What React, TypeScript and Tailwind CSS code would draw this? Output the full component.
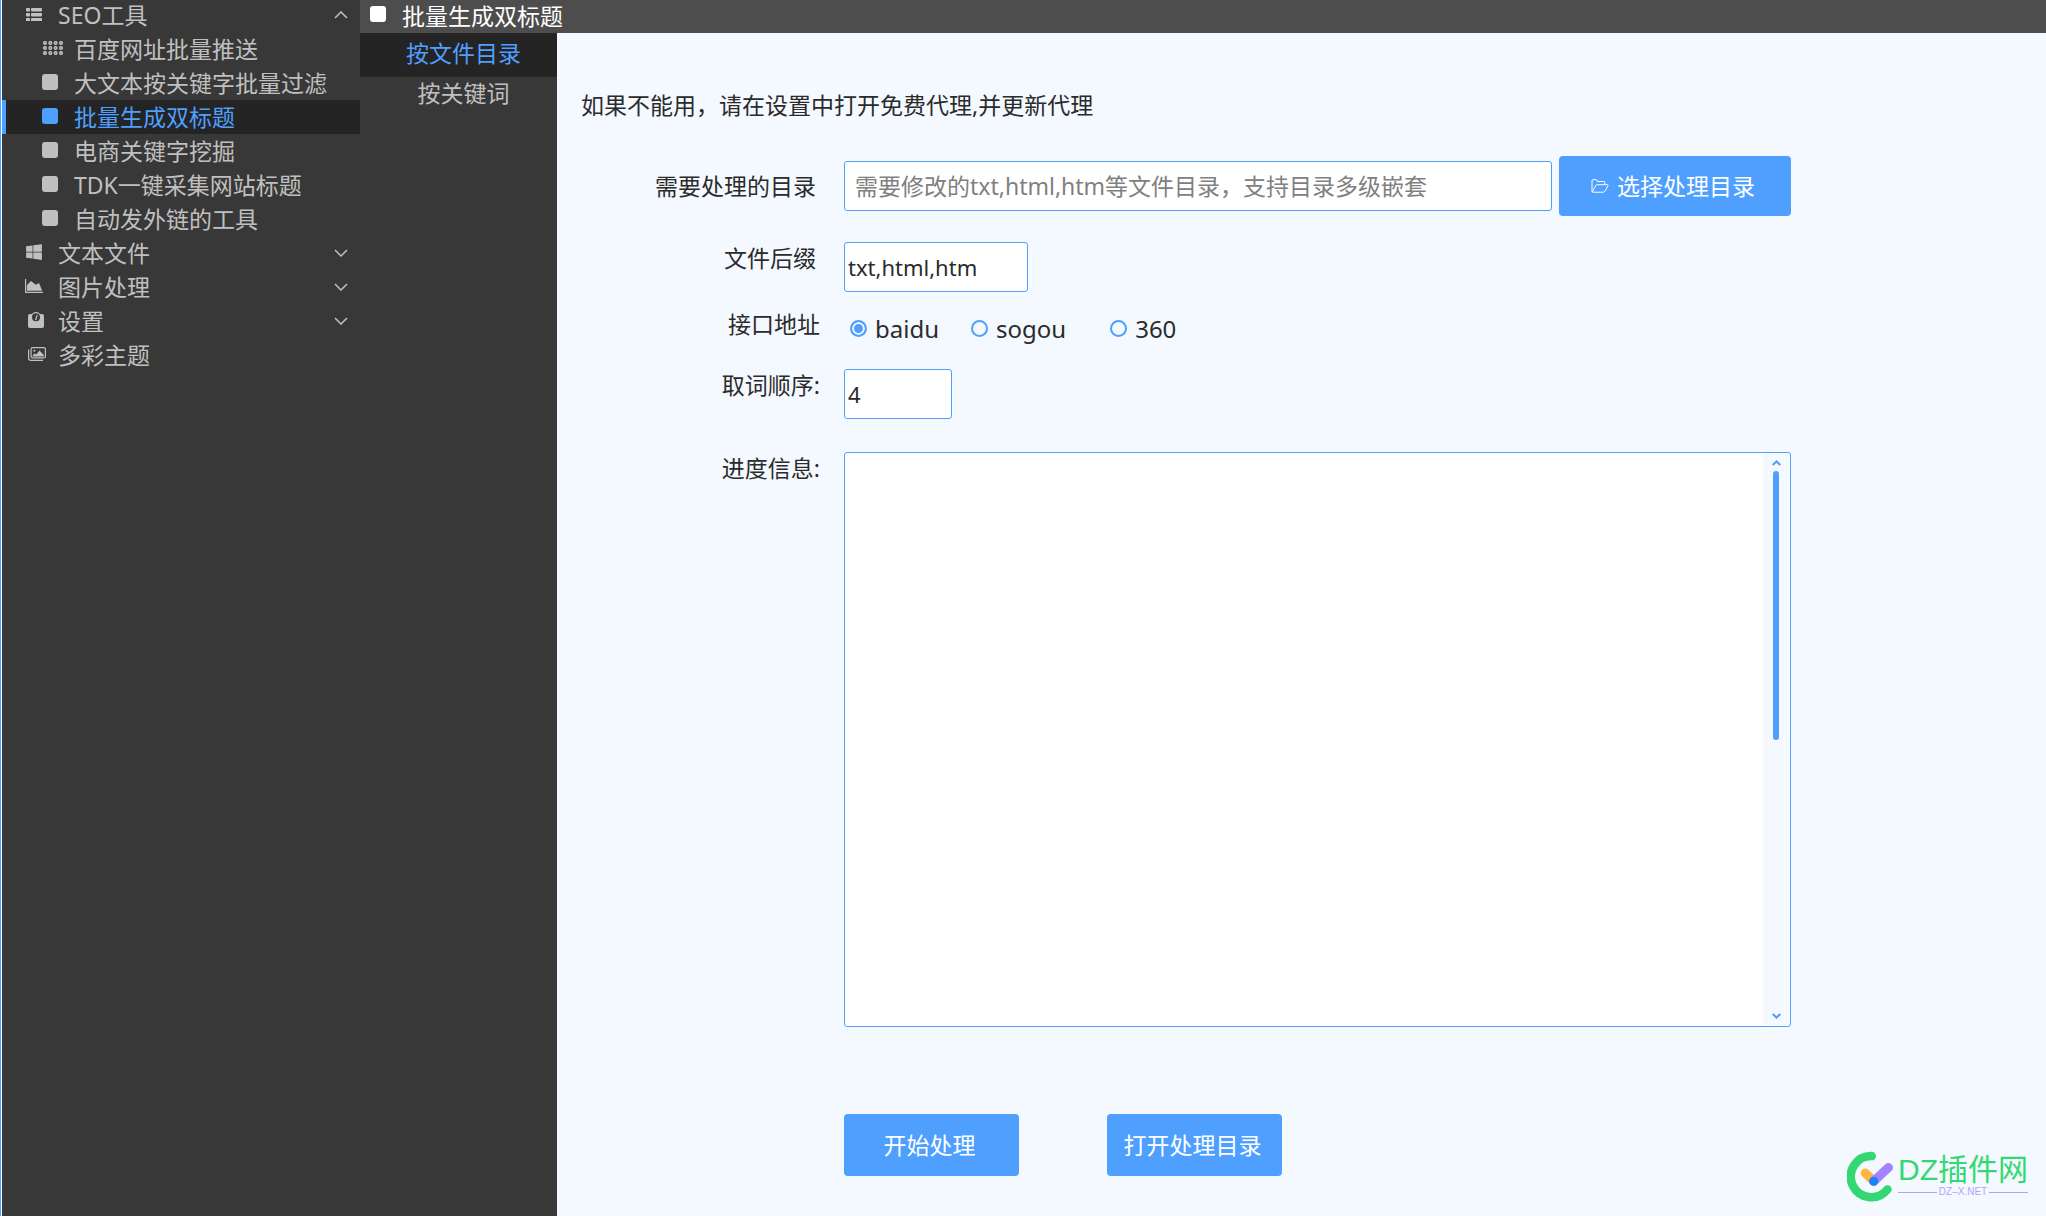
import { useState } from "react";
import type { ReactNode } from "react";
import { FaWindows } from "react-icons/fa";

type MenuItem = {
  label: string;
  icon: ReactNode;
  expanded?: boolean;
};

function ListIcon() {
  return (
    <svg className="ml-px h-[13px] w-4" viewBox="0 0 16 13" fill="currentColor">
      {[0, 5, 10].map((y) => (
        <g key={y}>
          <rect x="0" y={y} width="4" height="3.4" rx="0.8" />
          <rect x="5" y={y} width="11" height="3.4" rx="0.8" />
        </g>
      ))}
    </svg>
  );
}

function DotsIcon() {
  return (
    <svg
      className="ml-px h-[14px] w-5"
      viewBox="0 0 20 14"
      fill="#77777b"
      stroke="currentColor"
      strokeWidth="1.3"
    >
      {[2, 7, 12].map((y) =>
        [2, 7.3, 12.6, 18].map((x) => (
          <circle key={`${x}-${y}`} cx={x} cy={y} r="1.4" />
        )),
      )}
    </svg>
  );
}

function AreaIcon() {
  return (
    <svg className="h-[14px] w-[18px]" viewBox="0 0 18 14" fill="currentColor">
      <path d="M0 0h1.2v12.8H18V14H0z" />
      <path d="M2 11.8V6.2L5.8 2l5 3.8L14 4l3.2 7.8z" />
    </svg>
  );
}

function GaugeIcon() {
  return (
    <svg className="ml-[3px] size-4" viewBox="0 0 16 16" fill="currentColor">
      <rect x="0" y="2" width="16" height="14" rx="2" />
      <circle cx="8" cy="5" r="5" />
      <circle cx="8" cy="5.2" r="4" fill="#383838" />
      <path d="M7 7.6 8.900 2.600l.8.3-1.200 4.900a1 1 0 0 1-1.500-.2z" />
    </svg>
  );
}

function ImagesIcon() {
  return (
    <svg
      className="ml-[3px] h-[14px] w-[18px]"
      viewBox="0 0 18 14"
      fill="none"
      stroke="currentColor"
      strokeWidth="1.2"
    >
      <rect x="3.100" y="0.600" width="14.300" height="10.300" rx="1.500" />
      <path d="M.6 2.500v8.500c0 1.500.8 2.400 2.300 2.400H15" />
      <circle cx="6.300" cy="3.800" r="1" fill="currentColor" stroke="none" />
      <path
        d="M4.600 9.500V8.500l2.200-2 1.400 1L11.500 3.600l4.300 4.500v1.400z"
        fill="currentColor"
        stroke="none"
      />
    </svg>
  );
}

function FolderIcon() {
  return (
    <svg
      className="h-[14px] w-[18px]"
      viewBox="0 0 18 14"
      fill="none"
      stroke="currentColor"
      strokeLinejoin="round"
    >
      <path d="M1 12.3V1.8C1 1 1.400.7 2 .7h3.200c.6 0 1 .4 1 1v.8h6.600c.7 0 1 .4 1 1v2" />
      <path d="M1.200 13.200 4.700 6.700c.3-.7.8-1 1.500-1H16.500c.7 0 .9.4.5 1l-3 5.500c-.4.7-.9 1-1.600 1H2c-.6 0-1-.3-1-.9" />
    </svg>
  );
}

function Chevron({ up = false }: { up?: boolean }) {
  return (
    <svg
      className="h-2 w-[14px]"
      viewBox="0 0 14 8"
      fill="none"
      stroke="currentColor"
      strokeWidth="1.5"
    >
      <path d={up ? "M1 7l6-6 6 6" : "M1 1l6 6 6-6"} />
    </svg>
  );
}

function ScrollArrow({ up = false }: { up?: boolean }) {
  return (
    <svg
      className="h-[6px] w-[9px]"
      viewBox="0 0 9 6"
      fill="none"
      stroke="#4f9fff"
      strokeWidth="2"
    >
      <path d={up ? "M.7 5 4.500 1.400 8.300 5" : "M.7 1 4.500 4.600 8.300 1"} />
    </svg>
  );
}

function Square() {
  return <span className="block size-4 rounded-[3px] bg-current" />;
}

const tools: MenuItem[] = [
  { label: "百度网址批量推送", icon: <DotsIcon /> },
  { label: "大文本按关键字批量过滤", icon: <Square /> },
  { label: "批量生成双标题", icon: <Square /> },
  { label: "电商关键字挖掘", icon: <Square /> },
  { label: "TDK一键采集网站标题", icon: <Square /> },
  { label: "自动发外链的工具", icon: <Square /> },
];

const groups: MenuItem[] = [
  { label: "文本文件", icon: <FaWindows className="size-[18px]" />, expanded: false },
  { label: "图片处理", icon: <AreaIcon />, expanded: false },
  { label: "设置", icon: <GaugeIcon />, expanded: false },
  { label: "多彩主题", icon: <ImagesIcon /> },
];

function GroupButton({ label, icon, expanded }: MenuItem) {
  return (
    <button
      type="button"
      aria-expanded={expanded}
      className="flex h-[34px] w-full items-center pr-3 pl-[23px] text-left"
    >
      <span className="flex w-[33px] items-center pb-[2px]">{icon}</span>
      <span className="flex-1">{label}</span>
      {expanded === undefined ? null : <Chevron up={expanded} />}
    </button>
  );
}

function Sidebar() {
  const [active, setActive] = useState("批量生成双标题");

  return (
    <nav className="-mt-[2px] w-[358px] shrink-0 bg-[#383838] text-[#c0c0c0]">
      <GroupButton label="SEO工具" icon={<ListIcon />} expanded />
      {tools.map((tool) => (
        <button
          key={tool.label}
          type="button"
          onClick={() => setActive(tool.label)}
          className={`flex h-[34px] w-full items-center border-l-4 pl-9 text-left ${
            active === tool.label
              ? "border-[#4f9fff] bg-[#242424] text-[#4f9fff]"
              : "border-transparent"
          }`}
        >
          <span className="flex w-8 items-center pb-[2px]">{tool.icon}</span>
          {tool.label}
        </button>
      ))}
      {groups.map((group) => (
        <GroupButton key={group.label} {...group} />
      ))}
    </nav>
  );
}

const fieldClass =
  "h-[50px] rounded-[3px] border border-[#4f9fff] bg-white text-[#2b2b2b] outline-none";
const labelClass = "w-[239px] shrink-0 text-right";
const buttonClass = "rounded-[4px] bg-[#4f9fff] text-white";

function TitleForm() {
  const [engine, setEngine] = useState("baidu");

  return (
    <form className="flex flex-1 flex-col pt-14 pr-[255px] pb-10 pl-6 leading-8 text-[#2b2b2b]">
      <p>如果不能用，请在设置中打开免费代理,并更新代理</p>

      <div className="mt-[35px] flex items-center">
        <label htmlFor="dir" className={`${labelClass} pr-1`}>
          需要处理的目录
        </label>
        <input
          id="dir"
          placeholder="需要修改的txt,html,htm等文件目录，支持目录多级嵌套"
          className={`${fieldClass} ml-6 min-w-0 flex-1 px-[10px] placeholder:text-[#808080]`}
        />
        <button
          type="button"
          className={`${buttonClass} ml-[7px] flex h-[60px] w-[232px] items-center justify-center gap-2 pr-1`}
        >
          <FolderIcon />
          选择处理目录
        </button>
      </div>

      <div className="mt-[26px] flex items-start gap-6">
        <label htmlFor="suffix" className={`${labelClass} pr-1`}>
          文件后缀
        </label>
        <input
          id="suffix"
          defaultValue="txt,html,htm"
          className={`${fieldClass} w-[184px] px-[3px] text-[22px]`}
        />
      </div>

      <div role="radiogroup" aria-labelledby="engine" className="mt-4 flex items-start gap-6">
        <span id="engine" className={labelClass}>
          接口地址
        </span>
        <div className="flex h-[45px] items-center gap-8 pb-1 pl-[6px] text-[24px]">
          {["baidu", "sogou", "360"].map((name) => (
            <label key={name} className="flex items-center gap-2 last:pl-3">
              <input
                type="radio"
                name="engine"
                value={name}
                checked={engine === name}
                onChange={() => setEngine(name)}
                className="size-[17px] appearance-none rounded-full border-2 border-[#4f9fff] checked:bg-[#4f9fff] checked:shadow-[inset_0_0_0_2px_#f4f9ff]"
              />
              {name}
            </label>
          ))}
        </div>
      </div>

      <div className="mt-4 flex items-start gap-6">
        <label htmlFor="order" className={labelClass}>
          取词顺序:
        </label>
        <input
          id="order"
          defaultValue="4"
          className={`${fieldClass} w-[108px] px-[3px] text-[22px]`}
        />
      </div>

      <div className="mt-[33px] flex flex-1 items-stretch gap-6">
        <label htmlFor="progress" className={labelClass}>
          进度信息:
        </label>
        <div className="flex min-h-[300px] flex-1 rounded-[3px] border border-[#4f9fff] bg-white p-px">
          <textarea id="progress" className="flex-1 resize-none px-1 outline-none" />
          <div className="flex w-[26px] flex-col items-center bg-[#f4f9ff] pt-[6px] pb-[6px]">
            <ScrollArrow up />
            <div className="mt-[5px] h-[269px] w-[6px] rounded-full bg-[#4f9fff]" />
            <div className="mt-auto flex">
              <ScrollArrow />
            </div>
          </div>
        </div>
      </div>

      <div className="mt-[87px] flex gap-[88px] pl-[263px]">
        <button type="button" className={`${buttonClass} h-[62px] w-[175px] pr-1`}>
          开始处理
        </button>
        <button type="button" className={`${buttonClass} h-[62px] w-[175px] pr-1`}>
          打开处理目录
        </button>
      </div>
    </form>
  );
}

function SiteLogo() {
  return (
    <div className="absolute right-[18px] bottom-[14px] flex items-center gap-1">
      <svg className="h-[51px] w-[47px]" viewBox="60 61 144 153" fill="none" strokeLinecap="round">
        <path d="M136 75a63 63 0 1 0 48 102" stroke="#33d873" strokeWidth="26" />
        <path d="M116 127l26 25" stroke="#ffb63f" strokeWidth="28" />
        <path d="M187 110l-45 42" stroke="#a583ff" strokeWidth="28" />
        <circle cx="142" cy="152" r="14" fill="#1683ff" />
      </svg>
      <div className="flex flex-col pb-px">
        <span className="font-['Liberation_Sans','Noto_Sans_CJK_SC',sans-serif] text-[30px] leading-8 text-[#33d873]">
          DZ插件网
        </span>
        <span className="flex items-center gap-[2px] font-['Liberation_Sans',sans-serif] text-[10px] leading-3 text-[#b5a0ff]">
          <span className="h-px flex-1 bg-current" />
          DZ–X.NET
          <span className="h-px flex-1 bg-current" />
        </span>
      </div>
    </div>
  );
}

export default function App() {
  return (
    <div className="relative flex min-h-screen overflow-hidden border-l border-[#4f9fff] bg-white pl-px font-['Noto_Sans','Noto_Sans_CJK_SC',sans-serif] text-[23px] leading-8 font-normal">
      <Sidebar />
      <div className="flex min-w-0 flex-1 flex-col">
        <header className="flex h-[33px] items-center bg-[#4d4d4d] pb-[2px] pl-[10px] text-white">
          <span className="flex w-8 pb-[3px]">
            <Square />
          </span>
          <h1>批量生成双标题</h1>
        </header>
        <div className="flex flex-1">
          <nav className="flex w-[197px] shrink-0 flex-col bg-[#383838] text-[#c0c0c0]">
            <a href="#dir" className="block h-11 bg-[#242424] pt-1 pl-[10px] text-center text-[#4f9fff]">
              按文件目录
            </a>
            <a href="#keyword" className="block pl-[10px] text-center">
              按关键词
            </a>
          </nav>
          <main className="flex min-w-0 flex-1 bg-[#f4f9ff]">
            <TitleForm />
          </main>
        </div>
      </div>
      <SiteLogo />
    </div>
  );
}
